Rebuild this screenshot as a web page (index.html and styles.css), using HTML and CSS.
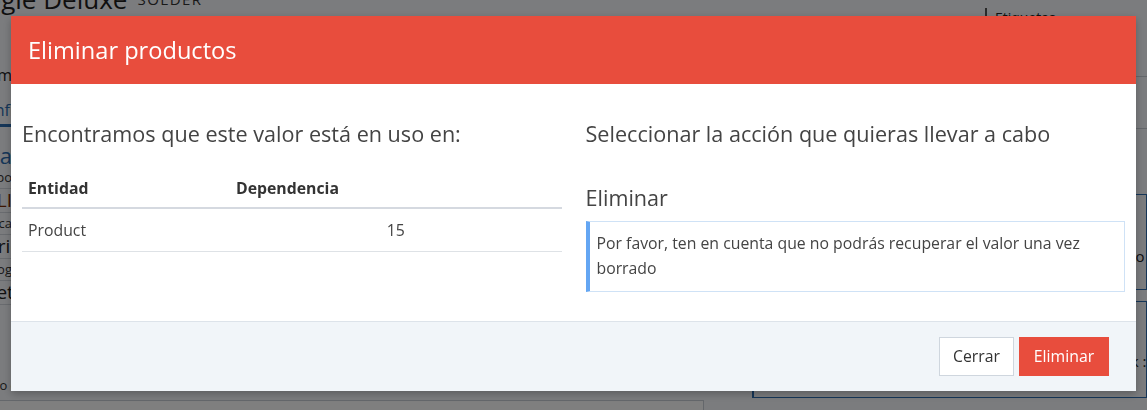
FILE: index.html
```html
<!DOCTYPE html>
<html lang="es">
<head>
<meta charset="utf-8">
<title>Eliminar productos</title>
<link rel="stylesheet" href="styles.css">
</head>
<body>
<div class="page">
  <div class="main">
    <div class="title-row">
      <span class="title">Google Deluxe</span>
      <span class="subtitle">SOLDER</span>
    </div>
    <div class="strip tab">Ítem</div>
    <div class="strip tab-active"><span>Config</span></div>
    <div class="strip section-title">Ficha</div>
    <div class="prop prop-label"><span class="cell">Tipo</span></div>
    <div class="prop prop-value prop-accent"><span class="cell">LI</span></div>
    <div class="prop prop-label"><span class="cell">Pública</span></div>
    <div class="prop prop-value"><span class="cell">Genérico</span></div>
    <div class="prop prop-label"><span class="cell">Blog</span></div>
    <div class="prop prop-value"><span class="cell">Marketing</span></div>
    <div class="prop-small">Campo de texto</div>
    <div class="text-box"></div>
  </div>
  <div class="side">
    <div class="side-head">Etiquetas</div>
    <div class="side-row"></div>
    <div class="side-card card-1"><span class="side-text">Precio :</span></div>
    <div class="side-card card-2"><span class="side-text">Stock :</span></div>
  </div>
</div>

<div class="backdrop"></div>

<div class="modal" role="dialog">
  <div class="modal-header">
    <h2 class="modal-title">Eliminar productos</h2>
  </div>
  <div class="modal-body">
    <div class="col">
      <h3 class="col-title">Encontramos que este valor está en uso en:</h3>
      <table class="deps">
        <thead>
          <tr><th class="c-ent">Entidad</th><th>Dependencia</th></tr>
        </thead>
        <tbody>
          <tr><td>Product</td><td class="num">15</td></tr>
        </tbody>
      </table>
    </div>
    <div class="col">
      <h3 class="col-title">Seleccionar la acción que quieras llevar a cabo</h3>
      <h4 class="action-title">Eliminar</h4>
      <div class="note">Por favor, ten en cuenta que no podrás recuperar el valor una vez borrado</div>
    </div>
  </div>
  <div class="modal-footer">
    <button class="btn btn-light">Cerrar</button>
    <button class="btn btn-danger">Eliminar</button>
  </div>
</div>
</body>
</html>
```

FILE: styles.css
```css
* { box-sizing: border-box; }

html, body {
  margin: 0;
  padding: 0;
  width: 1147px;
  height: 410px;
  overflow: hidden;
}

body {
  font-family: "Open Sans", "Noto Sans", sans-serif;
  background: #f6f8fd;
  color: #333;
}

/* ---------- page behind the dialog ---------- */
.page {
  display: flex;
  margin-left: -49px;
}

.main {
  width: 753px;
  flex: none;
}

.title-row {
  display: flex;
  align-items: baseline;
  gap: 10px;
  height: 30px;
  margin-top: -16px;
  white-space: nowrap;
}
.title {
  font-size: 26px;
  line-height: 30px;
  color: #1f1f1f;
}
.subtitle {
  font-size: 15px;
  letter-spacing: 1.5px;
  color: #333;
  position: relative;
  top: -4px;
}

.strip {
  width: 61px;
  text-align: right;
  white-space: nowrap;
}

.tab {
  padding-top: 50px;
  font-size: 16px;
  line-height: 22px;
  color: #222;
}
.tab-active {
  width: 70px;
  padding-top: 13px;
  font-size: 16px;
  line-height: 22px;
  text-align: left;
  padding-left: 24px;
  color: #2b6cb0;
}
.tab-active span {
  display: block;
  padding-bottom: 3px;
  border-bottom: 3px solid #2b6cb0;
}

.section-title {
  margin-top: 17px;
  font-size: 22px;
  line-height: 23px;
  color: #2b6cb0;
}

.prop {
  border-bottom: 1px solid #d2d7de;
  white-space: nowrap;
}
.prop .cell {
  display: block;
  width: 61px;
  text-align: right;
}
.prop-label {
  height: 22px;
  font-size: 13px;
  line-height: 21px;
  color: #333;
}
.prop-value {
  height: 24px;
  font-size: 19px;
  line-height: 23px;
  color: #222;
}
.prop-accent { color: #7a2a00; }

.prop-small {
  margin-top: 71px;
  padding-left: 13px;
  font-size: 13px;
  line-height: 18px;
  color: #333;
  white-space: nowrap;
}
.text-box {
  margin-top: 6px;
  height: 40px;
  border: 1px solid #c9ced6;
  background: #fff;
}

.side {
  flex: none;
  width: 443px;
  padding-left: 48px;
}
.side-head {
  margin-left: 233px;
  margin-top: 8px;
  height: 69px;
  border-left: 2px solid #555;
  border-bottom: 1px solid #c9ced6;
  padding-left: 8px;
  font-size: 14px;
  line-height: 20px;
  color: #222;
}
.side-row {
  margin-left: 233px;
  height: 52px;
  border-bottom: 1px solid #c9ced6;
}
.side-card {
  border: 1px solid #2b6cb0;
  border-left-width: 2px;
  padding-left: 347px;
  font-size: 15px;
  line-height: 20px;
  color: #222;
  white-space: nowrap;
}
.card-1 {
  margin-top: 65px;
  height: 96px;
  padding-top: 51px;
}
.card-2 {
  margin-top: 11px;
  height: 97px;
  padding-top: 49px;
}

.backdrop {
  position: fixed;
  inset: 0;
  background: rgba(0, 0, 0, 0.5);
}

/* ---------- dialog ---------- */
.modal {
  position: fixed;
  left: 11px;
  top: 16px;
  width: 1125px;
  background: #fff;
  box-shadow: 0 3px 8px rgba(0, 0, 0, 0.25);
}

.modal-header {
  background: #e84d3d;
  height: 68px;
  display: flex;
  align-items: center;
  padding: 0 17px;
}
.modal-title {
  margin: 0;
  font-size: 23.6px;
  font-weight: 400;
  color: #fff;
  line-height: 30px;
}

.modal-body {
  display: grid;
  grid-template-columns: 1fr 1fr;
  gap: 24px;
  padding: 36px 11px 29px;
}

.col-title {
  margin: 0;
  font-size: 21.6px;
  font-weight: 400;
  line-height: 27px;
  color: #444;
}

.deps {
  width: 100%;
  margin-top: 23px;
  border-collapse: collapse;
  font-size: 15.8px;
  color: #444;
}
.deps th {
  text-align: left;
  font-weight: 700;
  color: #333;
  padding: 8px 6px;
  line-height: 21px;
  border-bottom: 2px solid #d5d9e0;
}
.deps th.c-ent { width: 208px; }
.deps td {
  padding: 10px 6px;
  line-height: 22px;
  border-bottom: 1px solid #dee2e6;
}
.deps td.num { text-align: center; }

.action-title {
  margin: 37px 0 10px;
  font-size: 21.6px;
  font-weight: 400;
  line-height: 27px;
  color: #444;
}

.note {
  border: 1px solid #cfe2f6;
  border-left: 4px solid #64a6f3;
  padding: 9px 10px 10px 7px;
  font-size: 15.8px;
  line-height: 25px;
  color: #444;
}

.modal-footer {
  background: #f1f5f9;
  border-top: 1px solid #dde3ea;
  display: flex;
  justify-content: flex-end;
  gap: 5px;
  padding: 15px 27px 15px;
}

.btn {
  font-family: inherit;
  font-size: 15.8px;
  height: 39px;
  padding: 0;
  border: 1px solid transparent;
  cursor: pointer;
  line-height: 37px;
  text-align: center;
}
.btn-light {
  width: 75px;
  background: #fff;
  border-color: #cfd6de;
  color: #333;
}
.btn-danger {
  width: 90px;
  background: #e84d3d;
  border-color: #e84d3d;
  color: #fff;
}
```
